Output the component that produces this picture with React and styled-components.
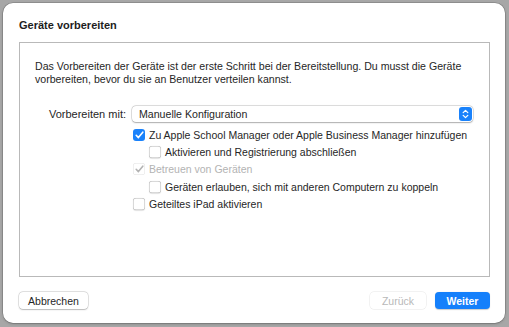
import React from "react";
import styled, { createGlobalStyle } from "styled-components";

const GlobalStyle = createGlobalStyle`
  html, body { margin: 0; padding: 0; }
  body {
    background: #a7a7a7;
    font-family: "Liberation Sans", Arial, sans-serif;
    -webkit-font-smoothing: antialiased;
  }
`;

const Page = styled.div`
  width: 509px;
  height: 327px;
  padding: 3px 4px 4px 3px;
  box-sizing: border-box;
`;

const Window = styled.div`
  width: 502px;
  height: 320px;
  box-sizing: border-box;
  background: #ffffff;
  border-radius: 10px;
  box-shadow: 0 0 0 0.5px rgba(0,0,0,0.25), 0 1px 3px rgba(0,0,0,0.2);
  display: flex;
  flex-direction: column;
  padding: 16px 15px 14px 16px;
`;

const Title = styled.h1`
  margin: 0 0 10px 0;
  font-size: 11px;
  line-height: 13px;
  font-weight: 700;
  color: #1d1d1d;
`;

const Box = styled.div`
  flex: 1;
  border: 1px solid #b9b9b9;
  background: #ffffff;
  padding: 17px 16px 0 15px;
  display: flex;
  flex-direction: column;
`;

const Paragraph = styled.p`
  margin: 0 0 20px 0;
  font-size: 10.6px;
  line-height: 13px;
  color: #262626;
  white-space: nowrap;
`;

const FormGrid = styled.div`
  display: grid;
  grid-template-columns: 91px 1fr;
  column-gap: 6px;
  align-items: center;
`;

const Label = styled.div`
  font-size: 11px;
  text-align: right;
  color: #262626;
  white-space: nowrap;
`;

const Popup = styled.div`
  height: 16px;
  border-radius: 4px;
  background: #fff;
  box-shadow: 0 0 0 0.5px rgba(0,0,0,0.2), 0 0.5px 1.5px rgba(0,0,0,0.25);
  display: flex;
  align-items: center;
  justify-content: space-between;
  padding: 0 1px 0 7px;
  font-size: 10.6px;
  color: #262626;
`;

const Stepper = styled.span`
  width: 13px;
  height: 14px;
  border-radius: 3px;
  background: #1a82fb;
  display: flex;
  align-items: center;
  justify-content: center;
`;

const Options = styled.div`
  grid-column: 2;
  display: flex;
  flex-direction: column;
  padding-top: 4px;
`;

const Row = styled.label`
  height: 17.4px;
  display: flex;
  align-items: center;
  gap: 4px;
  padding-left: ${(p) => (p.$indent ? 17 : 1)}px;
  font-size: 10.5px;
  white-space: nowrap;
  color: ${(p) => (p.$disabled ? "#b3b3b3" : "#262626")};
`;

const Check = styled.span`
  width: 12px;
  height: 12px;
  box-sizing: border-box;
  border-radius: 3px;
  flex: none;
  display: flex;
  align-items: center;
  justify-content: center;
  background: ${(p) => (p.$checked && !p.$disabled ? "#1a82fb" : "#fff")};
  box-shadow: ${(p) =>
    p.$checked && !p.$disabled
      ? "none"
      : p.$disabled
      ? "inset 0 0 0 0.5px rgba(0,0,0,0.12)"
      : "inset 0 0 0 0.5px rgba(0,0,0,0.3), 0 0.5px 1px rgba(0,0,0,0.12)"};
`;

const Footer = styled.div`
  display: flex;
  align-items: center;
  margin-top: 15px;
  gap: 9px;
`;

const Spacer = styled.div`
  flex: 1;
`;

const Button = styled.button`
  height: 17px;
  min-width: ${(p) => p.$w}px;
  padding: 0 8px;
  border: none;
  border-radius: 4px;
  font-family: inherit;
  font-size: 10.5px;
  font-weight: ${(p) => (p.$primary ? 700 : 400)};
  color: ${(p) => (p.$primary ? "#fff" : p.$disabled ? "#b8b8b8" : "#262626")};
  background: ${(p) => (p.$primary ? "#1580fb" : "#fff")};
  box-shadow: ${(p) =>
    p.$primary
      ? "0 0.5px 1px rgba(0,0,0,0.2)"
      : p.$disabled
      ? "0 0 0 0.5px rgba(0,0,0,0.1)"
      : "0 0 0 0.5px rgba(0,0,0,0.18), 0 0.5px 1.5px rgba(0,0,0,0.2)"};
`;

const CheckMark = ({ color }) => (
  <svg width="9" height="8" viewBox="0 0 9 8">
    <path d="M1.2 4.3 L3.4 6.6 L7.8 1.2" fill="none" stroke={color} strokeWidth="1.6" strokeLinecap="round" strokeLinejoin="round" />
  </svg>
);

const Option = ({ children, checked, disabled, indent }) => (
  <Row $indent={indent} $disabled={disabled}>
    <Check $checked={checked} $disabled={disabled}>
      {checked && <CheckMark color={disabled ? "#b3b3b3" : "#fff"} />}
    </Check>
    {children}
  </Row>
);

export default function App() {
  return (
    <>
      <GlobalStyle />
      <Page>
        <Window>
          <Title>Geräte vorbereiten</Title>
          <Box>
            <Paragraph>
              Das Vorbereiten der Geräte ist der erste Schritt bei der Bereitstellung. Du musst die Geräte
              <br />
              vorbereiten, bevor du sie an Benutzer verteilen kannst.
            </Paragraph>
            <FormGrid>
              <Label>Vorbereiten mit:</Label>
              <Popup>
                Manuelle Konfiguration
                <Stepper>
                  <svg width="7" height="10" viewBox="0 0 7 10">
                    <path d="M1.2 3.6 L3.5 1.4 L5.8 3.6 M1.2 6.4 L3.5 8.6 L5.8 6.4" fill="none" stroke="#fff" strokeWidth="1.3" strokeLinecap="round" strokeLinejoin="round" />
                  </svg>
                </Stepper>
              </Popup>
              <Options>
                <Option checked>Zu Apple School Manager oder Apple Business Manager hinzufügen</Option>
                <Option indent>Aktivieren und Registrierung abschließen</Option>
                <Option checked disabled>Betreuen von Geräten</Option>
                <Option indent>Geräten erlauben, sich mit anderen Computern zu koppeln</Option>
                <Option>Geteiltes iPad aktivieren</Option>
              </Options>
            </FormGrid>
          </Box>
          <Footer>
            <Button $w={69}>Abbrechen</Button>
            <Spacer />
            <Button $w={56} $disabled>Zurück</Button>
            <Button $w={55} $primary>Weiter</Button>
          </Footer>
        </Window>
      </Page>
    </>
  );
}
